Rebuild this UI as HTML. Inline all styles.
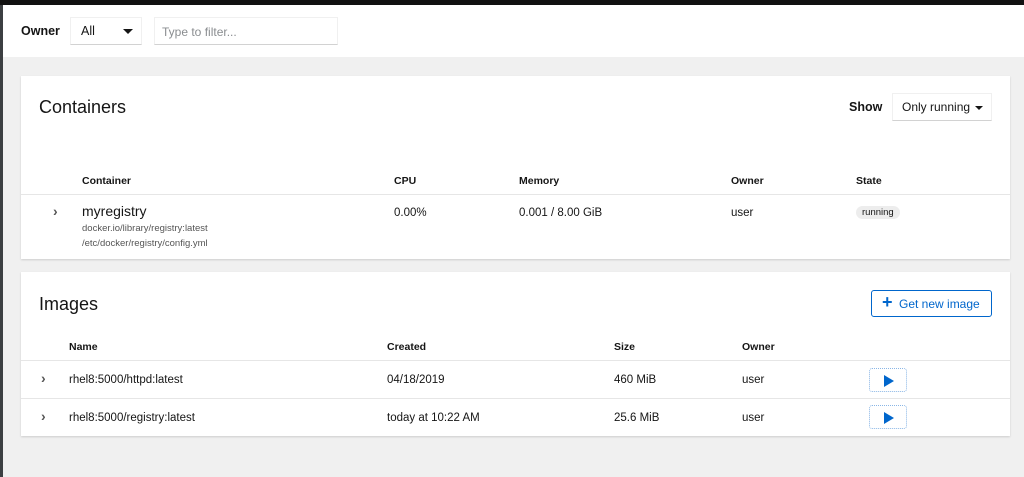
<!DOCTYPE html>
<html><head><style>
*{box-sizing:border-box;margin:0;padding:0}
body{width:1024px;height:477px;background:#f0f0f0;font-family:"Liberation Sans",sans-serif;color:#151515;position:relative;overflow:hidden;font-size:11.5px}
.a{position:absolute}
.top{left:0;top:0;width:1024px;height:5px;background:#111}
.lb{left:0;top:5px;width:3px;height:472px;background:#3c3f42}
.hdr{left:3px;top:5px;width:1021px;height:52px;background:#fff}
.card{background:#fff;left:21px;width:989px;box-shadow:0 1px 2px rgba(0,0,0,.15)}
.sel{border:1px solid #f0f0f0;border-bottom:1px solid #d2d2d2;background:#fff}
.b{font-weight:bold}
.line{height:1px;background:#e6e6e6;left:0;width:989px}
.sm{font-size:9.5px;color:#555}
.play{width:38px;height:24px;border:1px dotted #8ab6e6;border-radius:3px}
.play:after{content:"";position:absolute;left:14px;top:6px;border-left:10px solid #0066cc;border-top:6px solid transparent;border-bottom:6px solid transparent}
.chev{font-size:14px;color:#555;font-weight:bold}
</style></head><body>
<div class="a top"></div><div class="a lb"></div>
<div class="a hdr">
 <div class="a b" style="left:18px;top:19px;font-size:12.5px">Owner</div>
 <div class="a sel" style="left:67px;top:12px;width:72px;height:28px"><span class="a" style="left:10px;top:6px;font-size:12.5px">All</span><span class="a" style="left:52px;top:11px;border-top:5px solid #151515;border-left:5px solid transparent;border-right:5px solid transparent"></span></div>
 <div class="a sel" style="left:151px;top:12px;width:184px;height:28px"><span class="a" style="left:7px;top:7px;color:#8a8d90;font-size:12px">Type to filter...</span></div>
</div>
<div class="a card" style="top:76px;height:183px">
 <div class="a" style="left:18px;top:21px;font-size:18px">Containers</div>
 <div class="a b" style="left:828px;top:24px;font-size:12.5px">Show</div>
 <div class="a sel" style="left:871px;top:17px;width:100px;height:28px"><span class="a" style="left:9px;top:6px;font-size:12px">Only running</span><span class="a" style="left:82px;top:12px;border-top:4px solid #151515;border-left:4px solid transparent;border-right:4px solid transparent"></span></div>
 <div class="a b" style="left:61px;top:99px;font-size:10.5px">Container</div>
 <div class="a b" style="left:373px;top:99px;font-size:10.5px">CPU</div>
 <div class="a b" style="left:498px;top:99px;font-size:10.5px">Memory</div>
 <div class="a b" style="left:710px;top:99px;font-size:10.5px">Owner</div>
 <div class="a b" style="left:835px;top:99px;font-size:10.5px">State</div>
 <div class="a line" style="top:118px"></div>
 <div class="a chev" style="left:32px;top:127px">›</div>
 <div class="a" style="left:61px;top:127px;font-size:14px">myregistry</div>
 <div class="a sm" style="left:61px;top:147px">docker.io/library/registry:latest</div>
 <div class="a sm" style="left:61px;top:162px">/etc/docker/registry/config.yml</div>
 <div class="a" style="left:373px;top:131px">0.00%</div>
 <div class="a" style="left:498px;top:131px">0.001 / 8.00 GiB</div>
 <div class="a" style="left:710px;top:131px">user</div>
 <div class="a" style="left:835px;top:130px;background:#ededed;border-radius:8px;padding:1px 6px;font-size:9.5px">running</div>
</div>
<div class="a card" style="top:272px;height:164px">
 <div class="a" style="left:18px;top:22px;font-size:18px">Images</div>
 <div class="a" style="left:850px;top:18px;width:121px;height:27px;border:1px solid #0066cc;border-radius:3px;color:#0066cc;font-size:12px"><span class="a" style="left:10px;top:1px;font-size:18px;font-weight:bold">+</span><span class="a" style="left:27px;top:6px">Get new image</span></div>
 <div class="a b" style="left:48px;top:69px;font-size:10.5px">Name</div>
 <div class="a b" style="left:366px;top:69px;font-size:10.5px">Created</div>
 <div class="a b" style="left:593px;top:69px;font-size:10.5px">Size</div>
 <div class="a b" style="left:721px;top:69px;font-size:10.5px">Owner</div>
 <div class="a line" style="top:88px"></div>
 <div class="a chev" style="left:20px;top:98px">›</div>
 <div class="a" style="left:48px;top:102px">rhel8:5000/httpd:latest</div>
 <div class="a" style="left:366px;top:102px">04/18/2019</div>
 <div class="a" style="left:593px;top:102px">460 MiB</div>
 <div class="a" style="left:721px;top:102px">user</div>
 <div class="a play" style="left:848px;top:96px"></div>
 <div class="a line" style="top:126px"></div>
 <div class="a chev" style="left:20px;top:136px">›</div>
 <div class="a" style="left:48px;top:140px">rhel8:5000/registry:latest</div>
 <div class="a" style="left:366px;top:140px">today at 10:22 AM</div>
 <div class="a" style="left:593px;top:140px">25.6 MiB</div>
 <div class="a" style="left:721px;top:140px">user</div>
 <div class="a play" style="left:848px;top:133px"></div>
</div>
</body></html>
